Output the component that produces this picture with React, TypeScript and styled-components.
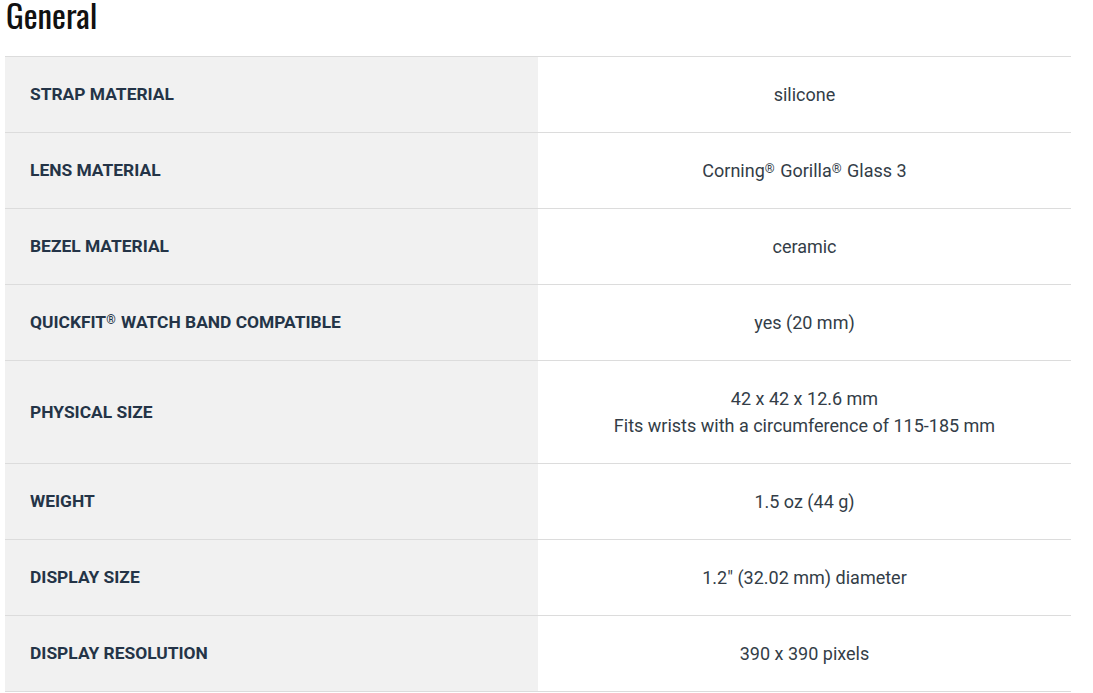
import React from "react";
import styled, { createGlobalStyle } from "styled-components";

const Global = createGlobalStyle`
  html, body { margin: 0; padding: 0; background: #fff; }
  body { font-family: Roboto, "Liberation Sans", Arial, sans-serif; }
`;

const Page = styled.div`
  padding: 0 22px 0 5px;
`;

const Title = styled.h2`
  margin: 0;
  padding: 0 0 0 1px;
  height: 56px;
  font-family: Oswald, "Liberation Sans Narrow", "DejaVu Sans Condensed", "Arial Narrow", sans-serif;
  font-stretch: condensed;
  font-weight: 400;
  font-size: 33px;
  line-height: 29px;
  color: #111;
`;

const Table = styled.div`
  border-top: 1px solid #dcdcdc;
`;

const Row = styled.div`
  display: grid;
  grid-template-columns: 1fr 1fr;
  border-bottom: 1px solid #dcdcdc;
`;

const Label = styled.div`
  background: #f1f1f1;
  padding: 24px 25px;
  display: flex;
  align-items: center;
  font-size: 17.4px;
  font-weight: 700;
  line-height: 27px;
  color: #243447;
`;

const Value = styled.div`
  padding: 24px 25px;
  display: flex;
  flex-direction: column;
  align-items: center;
  justify-content: center;
  text-align: center;
  font-size: 18px;
  font-weight: 400;
  line-height: 27px;
  color: #333d47;
`;

const Reg = styled.sup`
  font-size: 0.7em;
  vertical-align: 0.35em;
  line-height: 0;
  margin: 0 1px 0 0;
`;

type Spec = { label: React.ReactNode; value: React.ReactNode[] };

const specs: Spec[] = [
  { label: "STRAP MATERIAL", value: ["silicone"] },
  {
    label: "LENS MATERIAL",
    value: [
      <>
        Corning<Reg>®</Reg> Gorilla<Reg>®</Reg> Glass 3
      </>,
    ],
  },
  { label: "BEZEL MATERIAL", value: ["ceramic"] },
  {
    label: (
      <>
        QUICKFIT<Reg>®</Reg> WATCH BAND COMPATIBLE
      </>
    ),
    value: ["yes (20 mm)"],
  },
  {
    label: "PHYSICAL SIZE",
    value: ["42 x 42 x 12.6 mm", "Fits wrists with a circumference of 115-185 mm"],
  },
  { label: "WEIGHT", value: ["1.5 oz (44 g)"] },
  { label: "DISPLAY SIZE", value: ['1.2" (32.02 mm) diameter'] },
  { label: "DISPLAY RESOLUTION", value: ["390 x 390 pixels"] },
];

export default function App() {
  return (
    <Page>
      <Global />
      <Title>General</Title>
      <Table>
        {specs.map((s, i) => (
          <Row key={i}>
            <Label>
              <span>{s.label}</span>
            </Label>
            <Value>
              {s.value.map((v, j) => (
                <div key={j}>{v}</div>
              ))}
            </Value>
          </Row>
        ))}
      </Table>
    </Page>
  );
}
